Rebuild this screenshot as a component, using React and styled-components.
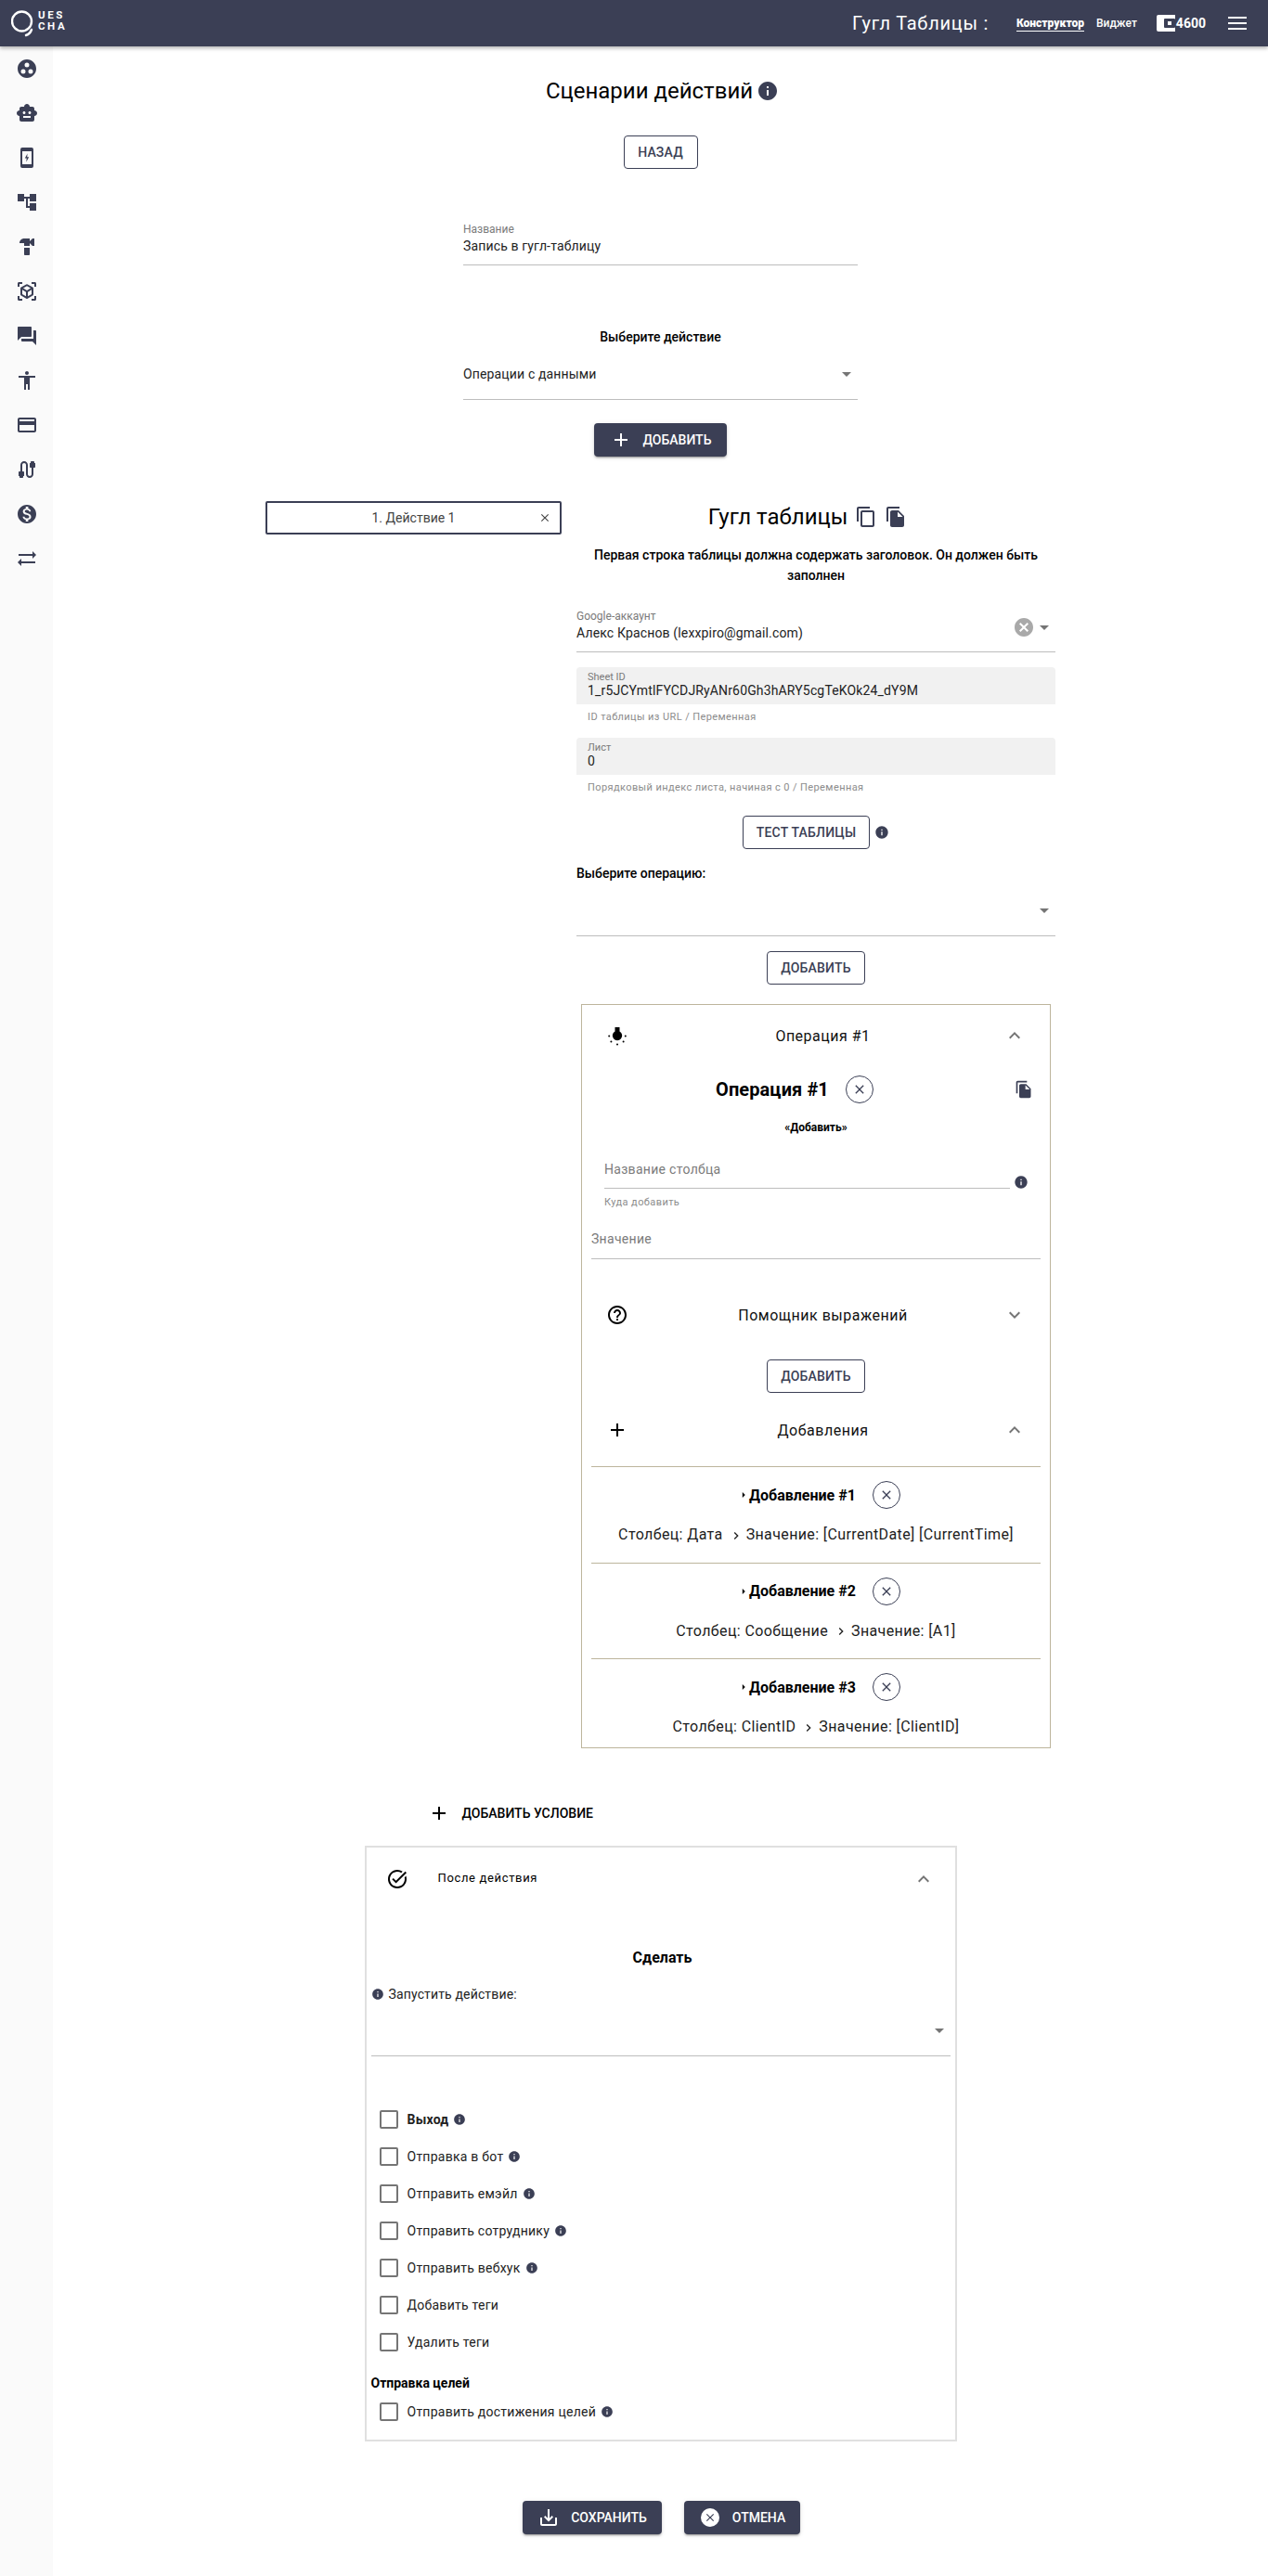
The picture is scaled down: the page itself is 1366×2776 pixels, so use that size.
import React from "react";
import styled, { createGlobalStyle } from "styled-components";
import {
  MdGroupWork, MdSmartToy, MdAccountTree, MdHardware, MdViewInAr, MdQuestionAnswer,
  MdAccessibility, MdCreditCard, MdCable, MdMonetizationOn, MdSyncAlt, MdInfo,
  MdContentCopy, MdFileCopy, MdArrowDropDown, MdCancel, MdClose, MdExpandLess, MdExpandMore,
  MdAdd, MdHelpOutline, MdTaskAlt, MdChevronRight, MdArrowRight, MdSaveAlt
} from "react-icons/md";

const NAVY = "#3b3f55";
const TAN = "#bdb59c";

const Global = createGlobalStyle`
  html, body { margin: 0; padding: 0; background: #fff; }
  body { font-family: Roboto, "Liberation Sans", sans-serif; color: #000; }
  * { box-sizing: border-box; }
`;

const Page = styled.div`
  min-height: 2776px;
  display: flex;
  flex-direction: column;
`;

const Header = styled.header`
  height: 50px;
  background: ${NAVY};
  box-shadow: 0 2px 4px rgba(0,0,0,.3);
  display: flex;
  align-items: center;
  color: #fff;
  padding: 0 23px 0 12px;
  position: relative;
  z-index: 2;
`;

const Logo = styled.div`
  display: flex;
  align-items: center;
  height: 42px;
`;
const LogoText = styled.div`
  display: flex;
  flex-direction: column;
  margin-left: 2px;
  margin-top: -6px;
  font-size: 11.5px;
  font-weight: 700;
  line-height: 12px;
  letter-spacing: 2.6px;
`;

const HeaderTitle = styled.div`
  margin-left: auto;
  font-size: 20px;
  letter-spacing: .75px;
  line-height: 30px;
`;
const HeaderTab = styled.span`
  margin-left: ${p => p.$gap}px;
  font-size: 12px;
  font-weight: ${p => (p.$active ? 900 : 500)};
  padding: 2px 0 1px;
  border-bottom: 1px solid ${p => (p.$active ? "#fff" : "transparent")};
`;
const Wallet = styled.div`
  margin-left: 21px;
  display: flex;
  align-items: center;
  font-size: 14px;
  font-weight: 700;
`;
const WalletGlyph = styled.span`
  width: 20px;
  height: 18px;
  background: #fff;
  border-radius: 2px 0 0 2px;
  display: flex;
  align-items: center;
  justify-content: flex-end;
  margin-right: 1px;
`;
const WalletSlot = styled.span`
  width: 12px;
  height: 10px;
  background: ${NAVY};
  border-radius: 1px;
  display: flex;
  align-items: center;
  justify-content: center;
  &::after { content: ""; width: 4px; height: 4px; background: #fff; }
`;
const Burger = styled.span`
  margin-left: 24px;
  width: 20px;
  height: 14px;
  display: flex;
  flex-direction: column;
  justify-content: space-between;
  & > i { display: block; height: 2px; background: #fff; }
`;

const Body = styled.div`
  flex: 1;
  display: flex;
`;
const Sidebar = styled.nav`
  width: 57px;
  flex: none;
  background: #fafafa;
  display: flex;
  flex-direction: column;
  color: ${NAVY};
`;
const SideItem = styled.div`
  height: 48px;
  display: flex;
  align-items: center;
  justify-content: center;
`;
const Main = styled.main`
  flex: 1;
  display: flex;
  flex-direction: column;
  align-items: center;
  padding: 30px 0 45px;
  min-width: 0;
`;

const Title = styled.h1`
  margin: 0 0 0 4px;
  height: 36px;
  display: flex;
  align-items: center;
  font-size: 24px;
  font-weight: 400;
  line-height: 36px;
  gap: 4px;
  & > svg { color: ${NAVY}; }
`;

const OutlineButton = styled.button`
  height: 36px;
  width: ${p => p.$w}px;
  margin-top: ${p => p.$mt || 0}px;
  background: #fff;
  border: 1px solid ${NAVY};
  border-radius: 4px;
  color: ${NAVY};
  font: 500 14px/1 Roboto, sans-serif;
  letter-spacing: .2px;
  text-transform: uppercase;
  padding: 0;
`;
const SolidButton = styled.button`
  height: 36px;
  width: ${p => p.$w}px;
  margin-top: ${p => p.$mt || 0}px;
  background: ${NAVY};
  color: #fff;
  border: 0;
  border-radius: 4px;
  box-shadow: 0 3px 1px -2px rgba(0,0,0,.2), 0 2px 2px 0 rgba(0,0,0,.14), 0 1px 5px 0 rgba(0,0,0,.12);
  font: 500 14px/1 Roboto, sans-serif;
  text-transform: uppercase;
  display: flex;
  align-items: center;
  justify-content: center;
  gap: 12px;
  padding: 0;
`;

const Underlined = styled.div`
  width: ${p => (p.$w ? p.$w + "px" : "100%")};
  margin-top: ${p => p.$mt || 0}px;
  height: ${p => p.$h}px;
  border-bottom: 1px solid #bdbdbd;
  position: relative;
  display: flex;
  flex-direction: column;
  flex: ${p => (p.$grow ? 1 : "none")};
`;
const SmallLabel = styled.div`
  font-size: 12px;
  line-height: 14px;
  color: #7a7a7a;
`;
const ValueText = styled.div`
  font-size: 14px;
  line-height: 20px;
  letter-spacing: .15px;
  color: #222;
  margin-top: ${p => p.$mt || 0}px;
`;
const Placeholder = styled.div`
  font-size: 14px;
  line-height: 20px;
  color: #7b7b7b;
  letter-spacing: .3px;
  margin-top: ${p => p.$mt || 0}px;
`;
const Caption = styled.div`
  text-align: center;
  font-weight: 500;
  font-size: 14px;
  line-height: 20px;
  margin-top: ${p => p.$mt || 0}px;
`;
const ArrowBox = styled.div`
  position: absolute;
  right: ${p => p.$right}px;
  top: ${p => p.$top}px;
  display: flex;
  align-items: center;
  color: #757575;
`;

const Columns = styled.div`
  margin-top: 48px;
  display: grid;
  grid-template-columns: 319px 516px;
  column-gap: 16px;
  align-items: start;
`;
const ActionTab = styled.div`
  height: 36px;
  border: 2px solid ${NAVY};
  border-radius: 2px;
  display: flex;
  align-items: center;
  justify-content: center;
  font-size: 14px;
  color: #444;
  position: relative;
`;
const TabClose = styled.span`
  position: absolute;
  right: 9px;
  top: 9px;
  display: flex;
  color: #444;
`;
const Panel = styled.section`
  display: flex;
  flex-direction: column;
`;
const PanelTitle = styled.div`
  height: 34px;
  display: flex;
  align-items: center;
  justify-content: center;
  font-size: 24px;
  gap: 8px;
  margin-right: 18px;
  & > svg { color: ${NAVY}; }
`;
const Notice = styled.div`
  margin-top: 13px;
  text-align: center;
  font-size: 14px;
  font-weight: 500;
  line-height: 22px;
`;
const Filled = styled.div`
  margin-top: ${p => p.$mt}px;
  height: 40px;
  background: #f1f1f1;
  border-radius: 4px 4px 0 0;
  padding: 5px 12px 0;
  display: flex;
  flex-direction: column;
`;
const FilledLabel = styled.div`
  font-size: 11px;
  line-height: 12px;
  color: #7a7a7a;
`;
const FilledValue = styled.div`
  font-size: 14px;
  line-height: 20px;
  letter-spacing: .15px;
  color: #222;
  margin-top: -2px;
`;
const Helper = styled.div`
  margin-top: 7px;
  padding-left: ${p => p.$pl ?? 12}px;
  font-size: 11px;
  line-height: 13px;
  letter-spacing: .4px;
  color: #8c8c8c;
`;
const TestRow = styled.div`
  margin: 24px 0 0 179px;
  display: flex;
  align-items: center;
  gap: 5px;
  & > svg { color: ${NAVY}; }
`;
const FieldHeading = styled.div`
  margin-top: 16px;
  font-size: 14px;
  font-weight: 500;
  line-height: 20px;
`;
const Center = styled.div`
  display: flex;
  justify-content: center;
  margin-top: ${p => p.$mt || 0}px;
`;

const OpBox = styled.div`
  margin: 21px 5px 0;
  border: 1px solid ${TAN};
`;
const AccRow = styled.div`
  height: ${p => p.$h || 66}px;
  margin-top: ${p => p.$mt || 0}px;
  display: grid;
  grid-template-columns: 76px 1fr 76px;
  align-items: center;
  font-size: 16px;
  letter-spacing: .5px;
  color: #111;
  & > :first-child { justify-self: center; }
  & > :last-child { color: #757575; justify-self: center; }
  & > span { text-align: center; margin-left: 15px; }
`;
const OpTitleRow = styled.div`
  margin-top: 10px;
  height: 30px;
  display: flex;
  align-items: center;
  padding: 0 18px 0 144px;
  & > svg { margin-left: auto; color: ${NAVY}; }
`;
const OpTitle = styled.div`
  font-size: 20px;
  font-weight: 700;
  line-height: 30px;
  color: #000;
  letter-spacing: .1px;
`;
const CircleClose = styled.span`
  width: 30px;
  height: 30px;
  border: 1px solid ${NAVY};
  border-radius: 50%;
  display: inline-flex;
  align-items: center;
  justify-content: center;
  color: ${NAVY};
  margin-left: 18px;
`;
const SubHeading = styled.div`
  margin-top: 18px;
  text-align: center;
  font-size: 12px;
  font-weight: 700;
  line-height: 16px;
`;
const InfoField = styled.div`
  margin: 23px 0 0 24px;
  padding-right: 23px;
  display: flex;
  align-items: flex-start;
  & > svg { color: ${NAVY}; margin: 20px 0 0 4px; }
`;
const InnerPad = styled.div`
  padding: 0 10px;
`;
const ItemList = styled.div`
  margin-top: 19px;
`;
const ItemRow = styled.div`
  border-top: 1px solid ${TAN};
  margin: 0 10px;
  height: ${p => p.$h || 103.5}px;
  display: flex;
  flex-direction: column;
  align-items: center;
`;
const ItemHead = styled.div`
  margin: 15px 0 0 6px;
  height: 30px;
  display: flex;
  align-items: center;
  font-size: 16px;
  font-weight: 700;
  & > svg { margin-right: -1px; }
`;
const ItemDetail = styled.div`
  margin-top: 17px;
  font-size: 16px;
  line-height: 22px;
  letter-spacing: .38px;
  color: #1c1c1c;
  display: flex;
  align-items: center;
  & > svg { margin: 1px 3px 0 6px; color: #222; }
`;

const AddCondition = styled.div`
  margin-top: 52px;
  width: 638px;
  height: 36px;
  padding-left: 68px;
  display: flex;
  align-items: center;
  gap: 13px;
  font-size: 14px;
  font-weight: 500;
  text-transform: uppercase;
`;
const AfterPanel = styled.section`
  margin-top: 17px;
  width: 638px;
  height: 642px;
  border: 2px solid #e0e0e0;
  display: flex;
  flex-direction: column;
`;
const AfterHeader = styled.div`
  height: 68px;
  display: flex;
  align-items: center;
  padding: 0 22px 0 21px;
  font-size: 13px;
  letter-spacing: .65px;
  & > span { margin: -4px 0 0 32px; }
  & > svg:last-child { margin-left: auto; color: #757575; }
`;
const DoTitle = styled.div`
  margin: 40px 0 0 4px;
  text-align: center;
  font-size: 16px;
  font-weight: 700;
  line-height: 22px;
`;
const RunLabel = styled.div`
  margin: 18px 0 0 5px;
  display: flex;
  align-items: center;
  gap: 5px;
  font-size: 14px;
  line-height: 20px;
  letter-spacing: .15px;
  color: #222;
  & > svg { color: ${NAVY}; }
`;
const SelectWrap = styled.div`
  padding: 0 5px;
`;
const CheckList = styled.div`
  margin-top: 48px;
`;
const CheckRow = styled.div`
  height: 40px;
  margin-top: ${p => p.$mt || 0}px;
  padding-left: 14px;
  display: flex;
  align-items: center;
  font-size: 14px;
  letter-spacing: .25px;
  color: #222;
  font-weight: ${p => (p.$bold ? 700 : 400)};
  & > svg { color: ${NAVY}; margin-left: 5px; }
`;
const Box = styled.span`
  width: 20px;
  height: 20px;
  border: 2px solid #757575;
  border-radius: 2px;
  margin-right: 10px;
  flex: none;
`;
const GroupHeading = styled.div`
  margin: 15px 0 0 5px;
  font-size: 14px;
  font-weight: 700;
  line-height: 18px;
`;
const Footer = styled.div`
  margin: 64px 0 0 2px;
  display: flex;
  gap: 24px;
`;
const CancelDot = styled.span`
  width: 20px;
  height: 20px;
  margin: 0 2px;
  border-radius: 50%;
  background: #fff;
  color: ${NAVY};
  display: flex;
  align-items: center;
  justify-content: center;
`;

const BoltPhone = () => (
  <svg width="24" height="24" viewBox="0 0 24 24" fill="currentColor">
    <path d="M7 1h10a2 2 0 0 1 2 2v18a2 2 0 0 1-2 2H7a2 2 0 0 1-2-2V3a2 2 0 0 1 2-2zm0 4v14h10V5H7z" />
    <path d="M12.6 7.5 9.8 12.6h1.9l-.4 3.9 2.9-5.3h-2z" />
  </svg>
);
const LogoMark = () => (
  <svg width="27" height="42" viewBox="0 0 27 42" fill="none" stroke="#fff" strokeWidth="2.4" strokeLinecap="round">
    <circle cx="11.5" cy="19" r="10.5" />
    <path d="M22 28c-1 3-3 5-6 6" />
  </svg>
);
const Bulb = () => (
  <svg width="24" height="24" viewBox="0 0 24 24" fill="#000">
    <path d="M9.5 3h5v4.5a5.2 5.2 0 1 1-5 0z" />
    <circle cx="3.2" cy="12.4" r="1" /><circle cx="20.8" cy="12.4" r="1" />
    <circle cx="5.4" cy="18.6" r="1" /><circle cx="18.6" cy="18.6" r="1" />
    <circle cx="12" cy="21.4" r="1" />
  </svg>
);

const sideIcons = [MdGroupWork, MdSmartToy, BoltPhone, MdAccountTree, MdHardware, MdViewInAr, MdQuestionAnswer, MdAccessibility, MdCreditCard, MdCable, MdMonetizationOn, MdSyncAlt];

const items = [
  { n: 1, col: "Дата", val: "[CurrentDate] [CurrentTime]" },
  { n: 2, col: "Сообщение", val: "[A1]" },
  { n: 3, col: "ClientID", val: "[ClientID]", h: 96 },
];
const checks = [
  { t: "Выход", bold: true, info: true },
  { t: "Отправка в бот", info: true },
  { t: "Отправить емэйл", info: true },
  { t: "Отправить сотруднику", info: true },
  { t: "Отправить вебхук", info: true },
  { t: "Добавить теги" },
  { t: "Удалить теги" },
];

export default function App() {
  return (
    <Page>
      <Global />
      <Header>
        <Logo>
          <LogoMark />
          <LogoText>
            <span>UES</span>
            <span>CHA</span>
          </LogoText>
        </Logo>
        <HeaderTitle>Гугл Таблицы :</HeaderTitle>
        <HeaderTab $gap={30} $active>Конструктор</HeaderTab>
        <HeaderTab $gap={13}>Виджет</HeaderTab>
        <Wallet>
          <WalletGlyph><WalletSlot /></WalletGlyph>
          4600
        </Wallet>
        <Burger><i /><i /><i /></Burger>
      </Header>
      <Body>
        <Sidebar>
          {sideIcons.map((I, i) => <SideItem key={i}><I size={24} /></SideItem>)}
        </Sidebar>
        <Main>
          <Title>Сценарии действий <MdInfo size={24} /></Title>
          <OutlineButton $w={80} $mt={30}>Назад</OutlineButton>
          <Underlined $w={425} $h={46} $mt={58}>
            <SmallLabel>Название</SmallLabel>
            <ValueText $mt={1}>Запись в гугл-таблицу</ValueText>
          </Underlined>
          <Caption $mt={67}>Выберите действие</Caption>
          <Underlined $w={425} $h={58}>
            <ValueText $mt={20}>Операции с данными</ValueText>
            <ArrowBox $right={0} $top={18}><MdArrowDropDown size={24} /></ArrowBox>
          </Underlined>
          <SolidButton $w={143} $mt={25}><MdAdd size={24} />Добавить</SolidButton>
          <Columns>
            <ActionTab>
              1. Действие 1
              <TabClose><MdClose size={14} /></TabClose>
            </ActionTab>
            <Panel>
              <PanelTitle>Гугл таблицы<MdContentCopy size={24} /><MdFileCopy size={24} /></PanelTitle>
              <Notice>Первая строка таблицы должна содержать заголовок. Он должен быть заполнен</Notice>
              <Underlined $h={46} $mt={26}>
                <SmallLabel>Google-аккаунт</SmallLabel>
                <ValueText $mt={1}>Алекс Краснов (lexxpiro@gmail.com)</ValueText>
                <ArrowBox $right={22} $top={7}><MdCancel size={24} color="#a9a9a9" /></ArrowBox>
                <ArrowBox $right={0} $top={7}><MdArrowDropDown size={24} /></ArrowBox>
              </Underlined>
              <Filled $mt={16}>
                <FilledLabel>Sheet ID</FilledLabel>
                <FilledValue>1_r5JCYmtlFYCDJRyANr60Gh3hARY5cgTeKOk24_dY9M</FilledValue>
              </Filled>
              <Helper>ID таблицы из URL / Переменная</Helper>
              <Filled $mt={16}>
                <FilledLabel>Лист</FilledLabel>
                <FilledValue>0</FilledValue>
              </Filled>
              <Helper>Порядковый индекс листа, начиная с 0 / Переменная</Helper>
              <TestRow>
                <OutlineButton $w={137}>Тест таблицы</OutlineButton>
                <MdInfo size={16} />
              </TestRow>
              <FieldHeading>Выберите операцию:</FieldHeading>
              <Underlined $h={58}>
                <ArrowBox $right={0} $top={18}><MdArrowDropDown size={24} /></ArrowBox>
              </Underlined>
              <Center $mt={16}><OutlineButton $w={106}>Добавить</OutlineButton></Center>
              <OpBox>
                <AccRow>
                  <Bulb />
                  <span>Операция #1</span>
                  <MdExpandLess size={24} />
                </AccRow>
                <OpTitleRow>
                  <OpTitle>Операция #1</OpTitle>
                  <CircleClose><MdClose size={16} /></CircleClose>
                  <MdFileCopy size={20} />
                </OpTitleRow>
                <SubHeading>«Добавить»</SubHeading>
                <InfoField>
                  <Underlined $h={35} $grow>
                    <Placeholder $mt={4}>Название столбца</Placeholder>
                  </Underlined>
                  <MdInfo size={16} />
                </InfoField>
                <Helper $pl={24}>Куда добавить</Helper>
                <InnerPad>
                  <Underlined $h={54} $mt={1}>
                    <Placeholder $mt={22}>Значение</Placeholder>
                  </Underlined>
                </InnerPad>
                <AccRow $h={48} $mt={36}>
                  <MdHelpOutline size={24} color="#000" />
                  <span>Помощник выражений</span>
                  <MdExpandMore size={24} />
                </AccRow>
                <Center $mt={24}><OutlineButton $w={106}>Добавить</OutlineButton></Center>
                <AccRow $h={40} $mt={20}>
                  <MdAdd size={24} color="#000" />
                  <span>Добавления</span>
                  <MdExpandLess size={24} />
                </AccRow>
                <ItemList>
                  {items.map(it => (
                    <ItemRow key={it.n} $h={it.h}>
                      <ItemHead>
                        <MdArrowRight size={14} />
                        Добавление #{it.n}
                        <CircleClose><MdClose size={16} /></CircleClose>
                      </ItemHead>
                      <ItemDetail>
                        Столбец: {it.col}
                        <MdChevronRight size={16} />
                        Значение: {it.val}
                      </ItemDetail>
                    </ItemRow>
                  ))}
                </ItemList>
              </OpBox>
            </Panel>
          </Columns>
          <AddCondition><MdAdd size={24} />Добавить условие</AddCondition>
          <AfterPanel>
            <AfterHeader>
              <MdTaskAlt size={24} />
              <span>После действия</span>
              <MdExpandLess size={24} />
            </AfterHeader>
            <DoTitle>Сделать</DoTitle>
            <RunLabel><MdInfo size={14} />Запустить действие:</RunLabel>
            <SelectWrap>
              <Underlined $h={57}>
                <ArrowBox $right={0} $top={17}><MdArrowDropDown size={24} /></ArrowBox>
              </Underlined>
            </SelectWrap>
            <CheckList>
              {checks.map(c => (
                <CheckRow key={c.t} $bold={c.bold}>
                  <Box />
                  {c.t}
                  {c.info && <MdInfo size={14} />}
                </CheckRow>
              ))}
            </CheckList>
            <GroupHeading>Отправка целей</GroupHeading>
            <CheckRow $mt={2}><Box />Отправить достижения целей<MdInfo size={14} /></CheckRow>
          </AfterPanel>
          <Footer>
            <SolidButton $w={150}><MdSaveAlt size={24} />Сохранить</SolidButton>
            <SolidButton $w={125}><CancelDot><MdClose size={14} /></CancelDot>Отмена</SolidButton>
          </Footer>
        </Main>
      </Body>
    </Page>
  );
}
